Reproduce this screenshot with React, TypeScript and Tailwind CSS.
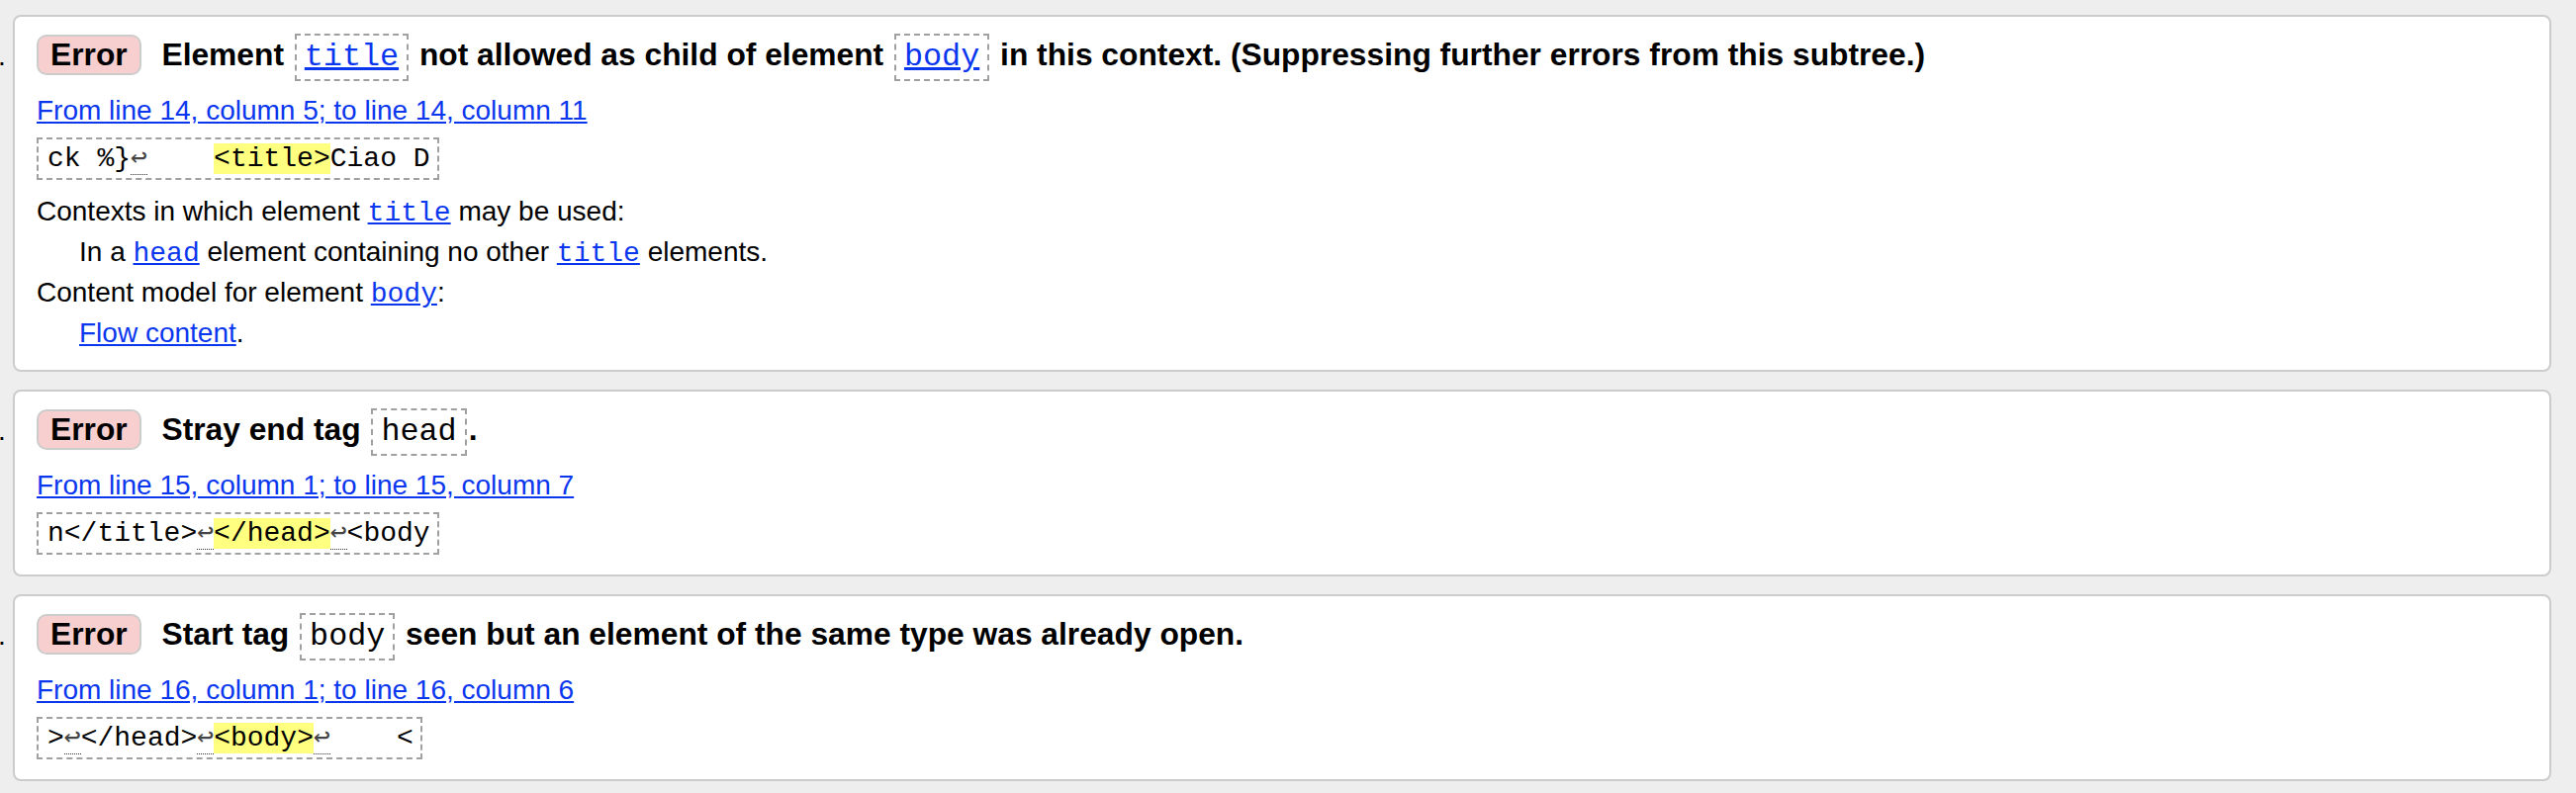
import type { ReactNode } from "react";

const mono = "font-['Liberation_Mono','DejaVu_Sans_Mono',monospace]";
const link = "text-[#0a37ee] underline";
const monoLink = `${link} ${mono} leading-none`;

function Badge() {
  return (
    <span className="mr-[12px] inline-block rounded-[10px] border-2 border-[#cccccc] bg-[#f7cfcf] px-[12px] leading-[normal]">
      Error
    </span>
  );
}

// dashed box round an element name in the heading
function Tag({ name, href }: { name: string; href?: boolean }) {
  return (
    <span
      className={`mx-[2px] inline-block border-2 border-dashed border-[#a0a0a0] px-[8px] py-[4px] font-normal leading-[normal] ${mono}`}
    >
      {href ? <a className={link}>{name}</a> : name}
    </span>
  );
}

function Lf() {
  return (
    <b className="border-b border-dotted border-[#333] font-normal leading-none text-[#444]">↩</b>
  );
}

function Snippet({ children }: { children: ReactNode }) {
  return (
    <div className="mt-[7px] flex">
      <code
        className={`block whitespace-pre border-2 border-dashed border-[#a0a0a0] py-[4px] pl-[9px] pr-[7px] text-[28px] leading-[normal] ${mono}`}
      >
        {children}
      </code>
    </div>
  );
}

function Hl({ children }: { children: ReactNode }) {
  return <mark className="bg-[#ffff80] text-black">{children}</mark>;
}

function Card({
  heading,
  location,
  snippet,
  extra,
}: {
  heading: ReactNode;
  location: string;
  snippet: ReactNode;
  extra?: ReactNode;
}) {
  return (
    <li className="mb-[18px] flex items-baseline">
      <span className="w-[13px] shrink-0">
        <span className="-ml-[2px]">.</span>
      </span>
      <div className="flex-1 rounded-[8px] border-2 border-[#cccccc] bg-white pb-[20px] pl-[22px] pr-[22px] pt-[17px]">
        <p className="text-[31.75px] font-bold leading-[36px]">
          <Badge /> {heading}
        </p>
        <p className="mt-[9px] leading-[41px]">
          <a className={link}>{location}</a>
        </p>
        <Snippet>{snippet}</Snippet>
        {extra}
      </div>
    </li>
  );
}

export default function App() {
  return (
    <div className="min-h-screen bg-[#eeeeee] pr-[25px] pt-[15px] font-['Liberation_Sans',Arial,sans-serif] text-[28px] leading-[41px] text-black">
      <ol>
        {/* title inside body */}
        <Card
          heading={
            <>
              Element <Tag name="title" href /> not allowed as child of element{" "}
              <Tag name="body" href /> in this context. (Suppressing further
              errors from this subtree.)
            </>
          }
          location="From line 14, column 5; to line 14, column 11"
          snippet={
            <>
              {"ck %}"}
              <Lf />
              {"    "}
              <Hl>{"<title>"}</Hl>
              {"Ciao D"}
            </>
          }
          extra={
            <dl className="mt-[11px] -mb-[3px] leading-[41px]">
              <dt>
                Contexts in which element <a className={monoLink}>title</a> may
                be used:
              </dt>
              <dd className="ml-[43px]">
                In a <a className={monoLink}>head</a> element containing no
                other <a className={monoLink}>title</a> elements.
              </dd>
              <dt>
                Content model for element <a className={monoLink}>body</a>:
              </dt>
              <dd className="ml-[43px]">
                <a className={link}>Flow content</a>.
              </dd>
            </dl>
          }
        />

        {/* stray head */}
        <Card
          heading={
            <>
              Stray end tag <Tag name="head" />.
            </>
          }
          location="From line 15, column 1; to line 15, column 7"
          snippet={
            <>
              {"n</title>"}
              <Lf />
              <Hl>{"</head>"}</Hl>
              <Lf />
              {"<body"}
            </>
          }
        />

        {/* second body */}
        <Card
          heading={
            <>
              Start tag <Tag name="body" /> seen but an element of the same
              type was already open.
            </>
          }
          location="From line 16, column 1; to line 16, column 6"
          snippet={
            <>
              {">"}
              <Lf />
              {"</head>"}
              <Lf />
              <Hl>{"<body>"}</Hl>
              <Lf />
              {"    <"}
            </>
          }
        />
      </ol>
    </div>
  );
}
